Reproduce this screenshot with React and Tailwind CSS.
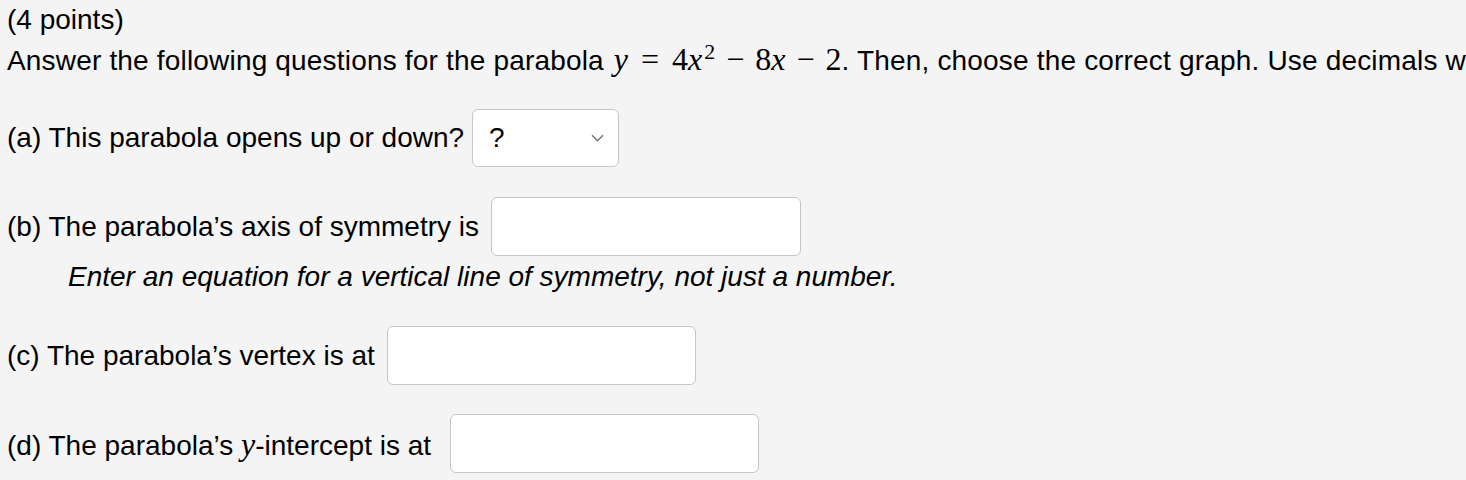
import React from "react";

function I({ children }) {
  return <span className="italic">{children}</span>;
}

function Op({ children, m }) {
  return <span className={`inline-block ${m}`}>{children}</span>;
}

function Box({ w }) {
  return <div className={`h-[59px] shrink-0 ${w} rounded-[6px] border border-[#c6c6c6] bg-white`} />;
}

export default function App() {
  return (
    <div className="min-h-screen bg-[#f4f4f4] text-[28px] text-black font-['Liberation_Sans',Arial,sans-serif] pl-[7px] whitespace-nowrap overflow-hidden">
      <div className="h-[40px] leading-[40px]">(4 points)</div>
      <div className="h-[40px] leading-[38px] tracking-[0.18px]">
        Answer the following questions for the parabola{" "}
        <span className="font-['Liberation_Serif',serif] text-[32px] tracking-normal ml-[2px]">
          <I>y</I>
          <Op m="mx-[13px]">=</Op>4<I>x</I>
          <sup className="text-[22px] top-[-11px] ml-[2px]">2</sup>
          <Op m="mx-[11px]">−</Op>8<I>x</I>
          <Op m="mx-[11px]">−</Op>2
        </span>
        . Then, choose the correct graph. Use decimals where needed.
      </div>
      <div className="mt-[29px] flex items-center gap-[8px]">
        <span>(a) This parabola opens up or down?</span>
        <div className="h-[58px] w-[147px] shrink-0 rounded-[6px] border border-[#c6c6c6] bg-white flex items-center justify-between pl-[16px] pr-[14px]">
          <span>?</span>
          <svg width="13" height="8" viewBox="0 0 13 8" fill="none">
            <path d="M1 1.2 L6.5 6.8 L12 1.2" stroke="#6f6f6f" strokeWidth="1.3" />
          </svg>
        </div>
      </div>
      <div className="mt-[30px] flex items-center gap-[12px]">
        <span>(b) The parabola’s axis of symmetry is</span>
        <Box w="w-[310px]" />
      </div>
      <div className="h-[42px] leading-[42px] pl-[61px] italic">
        Enter an equation for a vertical line of symmetry, not just a number.
      </div>
      <div className="mt-[28px] flex items-center gap-[12px]">
        <span>(c) The parabola’s vertex is at</span>
        <Box w="w-[309px]" />
      </div>
      <div className="mt-[29px] flex items-center gap-[19px]">
        <span>
          (d) The parabola’s{" "}
          <span className="font-['Liberation_Serif',serif] text-[32px] italic">y</span>-intercept is at
        </span>
        <Box w="w-[309px]" />
      </div>
    </div>
  );
}
